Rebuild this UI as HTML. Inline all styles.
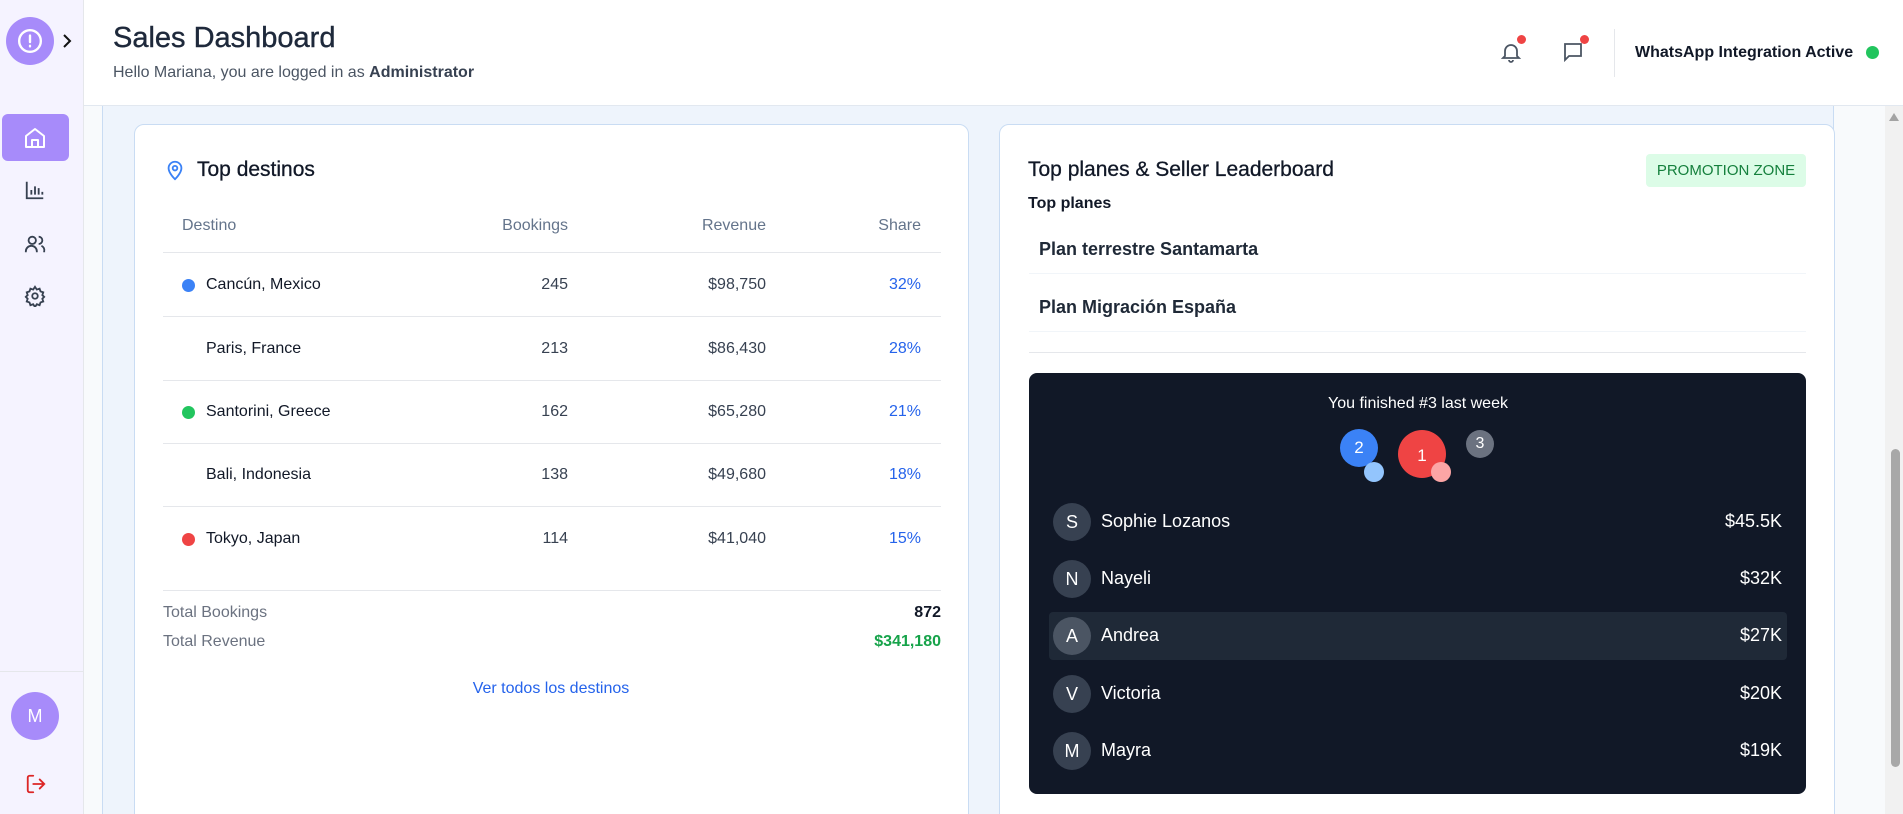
<!DOCTYPE html>
<html style="width:1903px;height:814px;overflow:hidden"><head><meta charset="utf-8"><style>
*{box-sizing:border-box;margin:0;padding:0}
body{width:1903px;height:814px;overflow:hidden;font-family:"Liberation Sans",sans-serif;background:#eef4fc;position:relative;color:#111827}
.a{position:absolute}
.side{left:0;top:0;width:84px;height:814px;background:#f5f3ff;border-right:1px solid #e5e7eb}
.hdr{left:84px;top:0;width:1819px;height:106px;background:#fff;border-bottom:1px solid #e2e8f0}
.card{background:#fff;border:1px solid #c9dcf3;border-radius:10px}
.th{font-size:16px;color:#64748b;top:217px}
.row{left:163px;width:778px;height:63px;border-bottom:1px solid #e5e7eb;font-size:16px}
.row span{position:absolute;top:22px}
.dot{width:13px;height:13px;border-radius:50%;top:25px!important}
.av{width:38px;height:38px;border-radius:50%;background:#374151;color:#fff;font-size:18px;text-align:center;line-height:38px}
.lr{left:1049px;width:738px;height:48px;color:#fff;font-size:18px}
.c{border-radius:50%;color:#fff;text-align:center}
</style></head><body>
<div class="a side"></div>
<div class="a" style="left:6px;top:17px;width:48px;height:48px;border-radius:50%;background:#a78bfa"></div>
<svg class="a" style="left:17px;top:28px" width="26" height="26" viewBox="0 0 24 24" fill="none" stroke="#fff" stroke-width="2.2" stroke-linecap="round"><circle cx="12" cy="12" r="10"/><path d="M12 7v6M12 16.5v.5"/></svg>
<svg class="a" style="left:60px;top:33px" width="14" height="16" viewBox="0 0 14 16" fill="none" stroke="#111" stroke-width="2"><path d="M4 2l6 6-6 6"/></svg>
<div class="a" style="left:2px;top:114px;width:67px;height:47px;border-radius:6px;background:#a78bfa"></div>
<svg class="a" style="left:23px;top:126px" width="24" height="24" viewBox="0 0 24 24" fill="none" stroke="#fff" stroke-width="2" stroke-linejoin="round"><path d="M3 10l9-7 9 7v11H3z"/><path d="M9 21v-7h6v7"/></svg>
<svg class="a" style="left:24px;top:179px" width="22" height="22" viewBox="0 0 24 24" fill="none" stroke="#374151" stroke-width="2"><path d="M3 3v18h18M8 17v-5M12 17V8M16 17v-7M20 17v-3"/></svg>
<svg class="a" style="left:24px;top:233px" width="22" height="22" viewBox="0 0 24 24" fill="none" stroke="#374151" stroke-width="2"><circle cx="9" cy="8" r="4"/><path d="M2 21v-1a6 6 0 0 1 12 0v1M16 4a4 4 0 0 1 0 8M19 14a5 5 0 0 1 3 6v1"/></svg>
<svg class="a" style="left:24px;top:285px" width="22" height="22" viewBox="0 0 24 24" fill="none" stroke="#374151" stroke-width="2"><circle cx="12" cy="12" r="3"/><path d="M12 2l2 3 3-1 1 3 3 1-1 3 2 2-2 2 1 3-3 1-1 3-3-1-2 3-2-3-3 1-1-3-3-1 1-3-2-2 2-2-1-3 3-1 1-3 3 1z"/></svg>
<div class="a" style="left:0;top:671px;width:84px;border-top:1px solid #e5e7eb"></div>
<div class="a c" style="left:11px;top:692px;width:48px;height:48px;background:#a78bfa;line-height:48px;font-size:18px">M</div>
<svg class="a" style="left:25px;top:773px" width="22" height="22" viewBox="0 0 24 24" fill="none" stroke="#dc2626" stroke-width="2" stroke-linecap="round"><path d="M9 21H5a2 2 0 0 1-2-2V5a2 2 0 0 1 2-2h4M16 17l5-5-5-5M21 12H9"/></svg>

<div class="a hdr"></div>
<div class="a" style="left:113px;top:22px;font-size:29px;color:#1e293b;-webkit-text-stroke:0.4px #1e293b">Sales Dashboard</div>
<div class="a" style="left:113px;top:64px;font-size:16px;color:#4b5563">Hello Mariana, you are logged in as <b style="color:#374151">Administrator</b></div>
<svg class="a" style="left:1499px;top:40px" width="24" height="24" viewBox="0 0 24 24" fill="none" stroke="#4b5563" stroke-width="1.8"><path d="M6 16V11a6 6 0 0 1 12 0v5l2 2H4zM10 20a2 2 0 0 0 4 0"/></svg>
<div class="a c" style="left:1517px;top:35px;width:9px;height:9px;background:#ef4444"></div>
<svg class="a" style="left:1561px;top:40px" width="24" height="24" viewBox="0 0 24 24" fill="none" stroke="#4b5563" stroke-width="1.8"><path d="M4 4h16v12H8l-4 4z"/></svg>
<div class="a c" style="left:1580px;top:35px;width:9px;height:9px;background:#ef4444"></div>
<div class="a" style="left:1614px;top:29px;height:48px;border-left:1px solid #e5e7eb"></div>
<div class="a" style="left:1635px;top:44px;font-size:16px;font-weight:bold;color:#111827">WhatsApp Integration Active</div>
<div class="a c" style="left:1866px;top:46px;width:13px;height:13px;background:#22c55e"></div>

<div class="a" style="left:84px;top:106px;width:19px;height:708px;background:#f8fafc;border-right:1px solid #c9dcf3"></div>
<div class="a" style="left:1833px;top:106px;width:52px;height:708px;background:#f8fafc;border-left:1px solid #c9dcf3"></div>
<div class="a" style="left:1885px;top:106px;width:18px;height:708px;background:#f1f1f1"></div>
<svg class="a" style="left:1889px;top:112px" width="10" height="10"><path d="M0 9L5 1L10 9z" fill="#a3a3a3"/></svg>
<div class="a" style="left:1891px;top:449px;width:9px;height:318px;border-radius:5px;background:#a8a8a8"></div>

<div class="a card" style="left:134px;top:124px;width:835px;height:700px"></div>
<svg class="a" style="left:164px;top:159px" width="22" height="22" viewBox="0 0 24 24" fill="none" stroke="#3b82f6" stroke-width="2"><path d="M12 22s7-6.5 7-12a7 7 0 0 0-14 0c0 5.5 7 12 7 12z"/><circle cx="12" cy="10" r="2.5"/></svg>
<div class="a" style="left:197px;top:158px;font-size:21px;-webkit-text-stroke:0.3px #111827">Top destinos</div>
<div class="a th" style="left:182px">Destino</div>
<div class="a th" style="left:468px;width:100px;text-align:right">Bookings</div>
<div class="a th" style="left:666px;width:100px;text-align:right">Revenue</div>
<div class="a th" style="left:821px;width:100px;text-align:right">Share</div>
<div class="a" style="left:163px;top:252px;width:778px;border-top:1px solid #e5e7eb"></div>

<div class="a row" style="top:254px"><span class="dot" style="left:19px;background:#3b82f6"></span><span style="left:43px">Cancún, Mexico</span><span style="right:373px;color:#374151">245</span><span style="right:175px;color:#374151">$98,750</span><span style="right:20px;color:#2563eb">32%</span></div>
<div class="a row" style="top:318px"><span style="left:43px">Paris, France</span><span style="right:373px;color:#374151">213</span><span style="right:175px;color:#374151">$86,430</span><span style="right:20px;color:#2563eb">28%</span></div>
<div class="a row" style="top:381px"><span class="dot" style="left:19px;background:#22c55e"></span><span style="left:43px">Santorini, Greece</span><span style="right:373px;color:#374151">162</span><span style="right:175px;color:#374151">$65,280</span><span style="right:20px;color:#2563eb">21%</span></div>
<div class="a row" style="top:444px"><span style="left:43px">Bali, Indonesia</span><span style="right:373px;color:#374151">138</span><span style="right:175px;color:#374151">$49,680</span><span style="right:20px;color:#2563eb">18%</span></div>
<div class="a row" style="top:508px;border-bottom:none"><span class="dot" style="left:19px;background:#ef4444"></span><span style="left:43px">Tokyo, Japan</span><span style="right:373px;color:#374151">114</span><span style="right:175px;color:#374151">$41,040</span><span style="right:20px;color:#2563eb">15%</span></div>
<div class="a" style="left:163px;top:590px;width:778px;border-top:1px solid #e5e7eb"></div>
<div class="a" style="left:163px;top:604px;font-size:16px;color:#6b7280">Total Bookings</div>
<div class="a" style="left:841px;top:604px;width:100px;text-align:right;font-size:16px;font-weight:bold">872</div>
<div class="a" style="left:163px;top:633px;font-size:16px;color:#6b7280">Total Revenue</div>
<div class="a" style="left:791px;top:633px;width:150px;text-align:right;font-size:16px;font-weight:bold;color:#16a34a">$341,180</div>
<div class="a" style="left:401px;top:680px;width:300px;text-align:center;font-size:16px;color:#2563eb">Ver todos los destinos</div>

<div class="a card" style="left:999px;top:124px;width:836px;height:700px"></div>
<div class="a" style="left:1028px;top:158px;font-size:21px;-webkit-text-stroke:0.3px #111827">Top planes &amp; Seller Leaderboard</div>
<div class="a" style="left:1646px;top:154px;width:160px;height:33px;background:#dcfce7;border-radius:4px;color:#15803d;font-size:15px;text-align:center;line-height:33px">PROMOTION ZONE</div>
<div class="a" style="left:1028px;top:195px;font-size:16px;font-weight:bold">Top planes</div>
<div class="a" style="left:1039px;top:239px;font-size:18px;font-weight:bold;color:#1f2937">Plan terrestre Santamarta</div>
<div class="a" style="left:1029px;top:273px;width:777px;border-top:1px solid #f1f5f9"></div>
<div class="a" style="left:1039px;top:297px;font-size:18px;font-weight:bold;color:#1f2937">Plan Migración España</div>
<div class="a" style="left:1029px;top:331px;width:777px;border-top:1px solid #f1f5f9"></div>
<div class="a" style="left:1029px;top:352px;width:777px;border-top:1px solid #e5e7eb"></div>

<div class="a" style="left:1029px;top:373px;width:777px;height:421px;background:#111827;border-radius:8px"></div>
<div class="a" style="left:1218px;top:395px;width:400px;text-align:center;color:#fff;font-size:16px">You finished #3 last week</div>
<div class="a c" style="left:1340px;top:429px;width:38px;height:38px;background:#3b82f6;line-height:38px;font-size:17px">2</div>
<div class="a c" style="left:1364px;top:462px;width:20px;height:20px;background:#93c5fd"></div>
<div class="a c" style="left:1398px;top:430px;width:48px;height:48px;background:#ef4444;line-height:52px;font-size:17px">1</div>
<div class="a c" style="left:1431px;top:462px;width:20px;height:20px;background:#fca5a5"></div>
<div class="a c" style="left:1466px;top:430px;width:28px;height:28px;background:#6b7280;line-height:28px;font-size:16px">3</div>

<div class="a lr" style="top:498px"><div class="a av" style="left:4px;top:5px">S</div><span class="a" style="left:52px;top:13px">Sophie Lozanos</span><span class="a" style="right:5px;top:13px">$45.5K</span></div>
<div class="a lr" style="top:555px"><div class="a av" style="left:4px;top:5px">N</div><span class="a" style="left:52px;top:13px">Nayeli</span><span class="a" style="right:5px;top:13px">$32K</span></div>
<div class="a lr" style="top:612px;background:#1f2937;border-radius:4px"><div class="a av" style="left:4px;top:5px;background:#4b5563">A</div><span class="a" style="left:52px;top:13px">Andrea</span><span class="a" style="right:5px;top:13px">$27K</span></div>
<div class="a lr" style="top:670px"><div class="a av" style="left:4px;top:5px">V</div><span class="a" style="left:52px;top:13px">Victoria</span><span class="a" style="right:5px;top:13px">$20K</span></div>
<div class="a lr" style="top:727px"><div class="a av" style="left:4px;top:5px">M</div><span class="a" style="left:52px;top:13px">Mayra</span><span class="a" style="right:5px;top:13px">$19K</span></div>
</body></html>
